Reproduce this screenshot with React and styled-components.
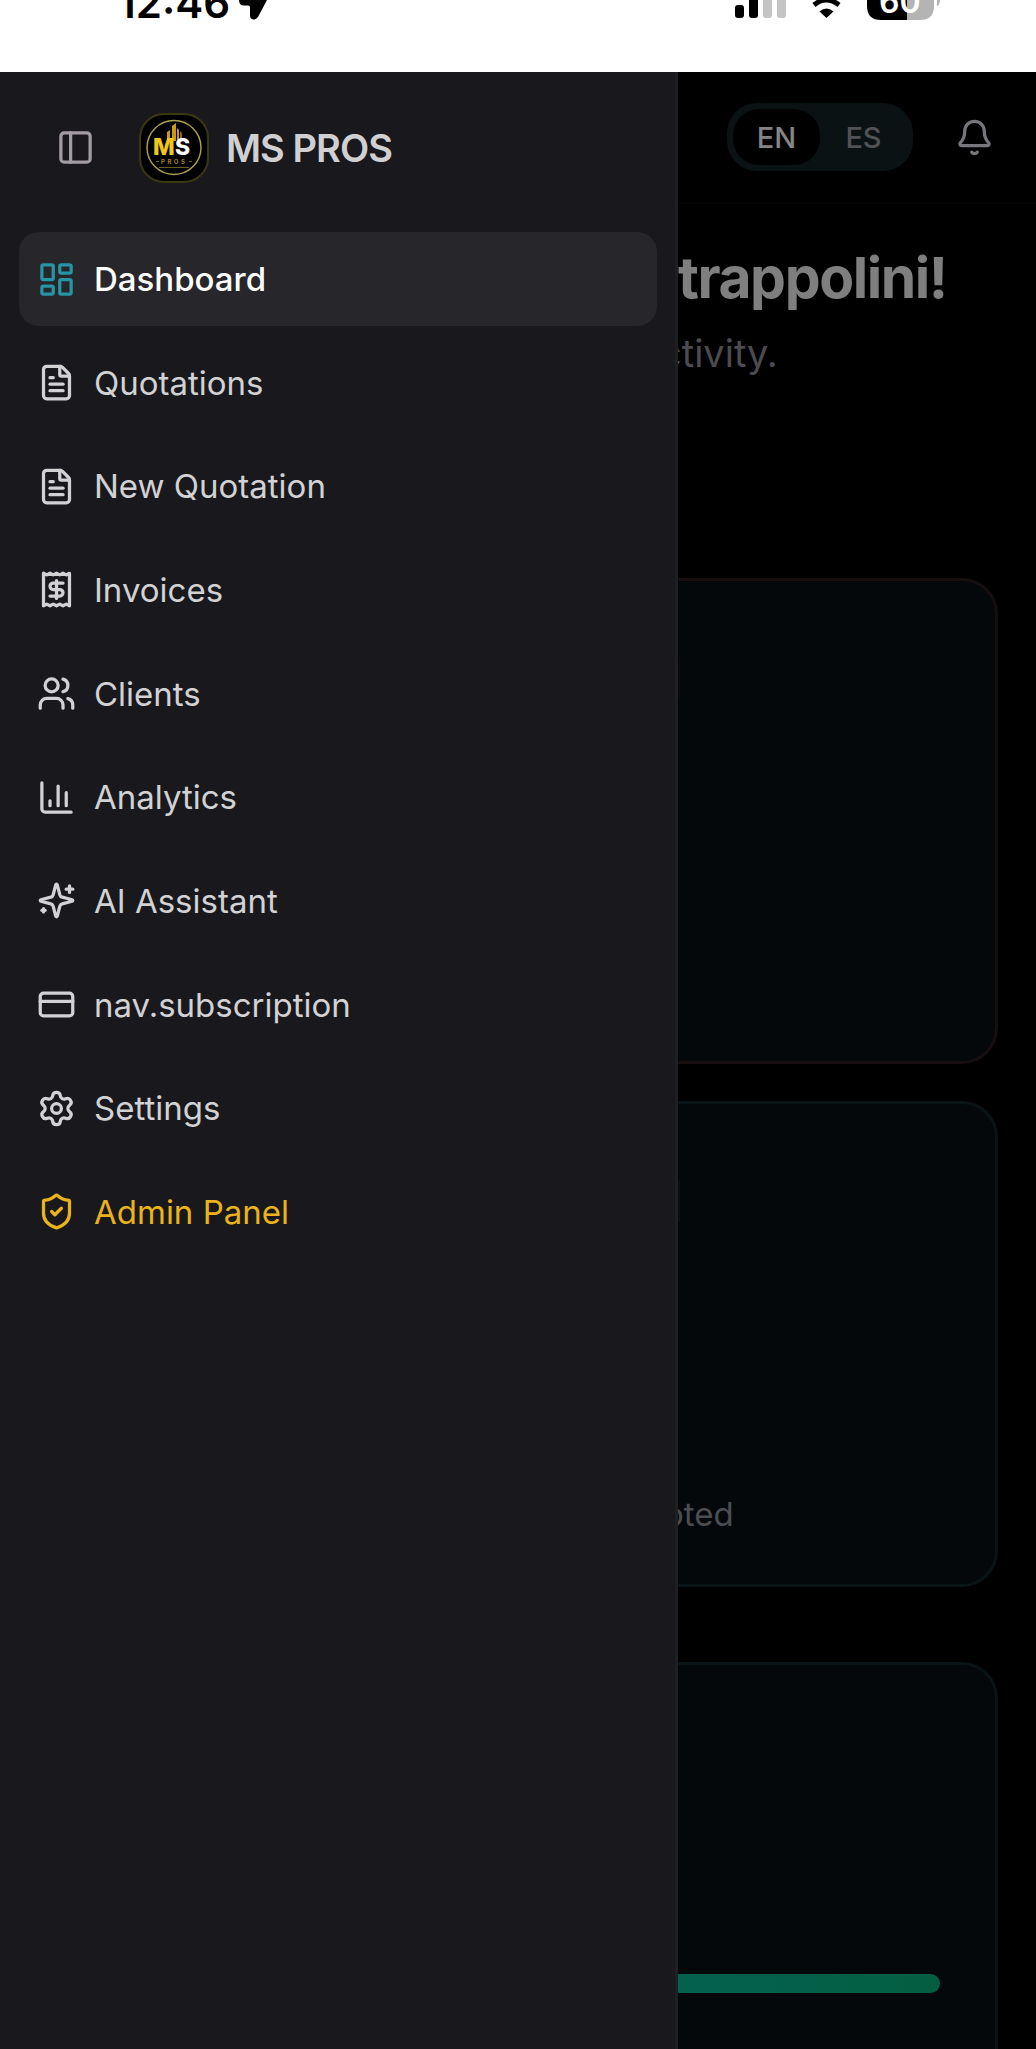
import React from 'react';
import styled, { createGlobalStyle } from 'styled-components';
import {
  PanelLeft, LayoutDashboard, FileText, Users, ChartColumn,
  CreditCard, Settings, ShieldCheck, Bell,
} from 'lucide-react';

const GlobalStyle = createGlobalStyle`
  *, *::before, *::after { box-sizing: border-box; }
  body {
    margin: 0;
    background: #000;
    font-family: Inter, "Liberation Sans", sans-serif;
    -webkit-font-smoothing: antialiased;
  }
  h1, p, ul { margin: 0; padding: 0; }
  ul { list-style: none; }
  button { font: inherit; border: 0; padding: 0; background: none; cursor: pointer; }
`;

const Page = styled.div`
  display: flex;
  flex-direction: column;
  min-height: 100vh;
`;

const StatusBar = styled.div`
  display: flex;
  justify-content: space-between;
  align-items: flex-start;
  height: 72px;
  padding: 0 96px 0 118px;
  background: #fff;
  color: #000;
  overflow: hidden;
`;

const Clock = styled.div`
  display: flex;
  gap: 9px;
  height: 23px;
  align-items: flex-end;
  font-size: 42px;
  font-weight: 600;
  line-height: 40px;
`;

const StatusIcons = styled.svg`
  display: block;
  width: 206px;
  height: 24px;
`;

const Body = styled.div`
  display: flex;
  flex: 1;
`;

const Sidebar = styled.aside`
  position: relative;
  z-index: 1;
  flex: 0 0 678px;
  padding: 0 18px 0 19px;
  background: #19191d;
  border-right: 3px solid #1d2022;
`;

const Brand = styled.div`
  display: flex;
  align-items: center;
  height: 160px;
  padding: 0 0 9px 37px;
`;

const BrandName = styled.span`
  margin-left: 17px;
  color: #d0d0d2;
  font-size: 38px;
  font-weight: 600;
  letter-spacing: -0.025em;
`;

const IconButton = styled.button`
  display: flex;
  color: ${(p) => p.$color};
`;

const Logo = styled.svg`
  width: 70px;
  height: 70px;
  margin-left: 44px;
`;

const NavList = styled.ul`
  display: flex;
  flex-direction: column;
  justify-content: space-between;
  min-height: 1027px;
`;

const NavLink = styled.a`
  display: flex;
  align-items: center;
  gap: 18px;
  height: 94px;
  padding: 0 18px;
  border-radius: 20px;
  background: ${(p) => (p.$active ? '#27272b' : 'transparent')};
  color: ${(p) => p.$color};
  font-size: 33px;
  font-weight: ${(p) => (p.$active ? 500 : 400)};
  text-decoration: none;
  svg { flex: none; color: ${(p) => p.$iconColor || p.$color}; }
`;

/* The main area slides under the edge of the open drawer. */
const Main = styled.main`
  display: flex;
  flex-direction: column;
  flex: 1;
  min-width: 0;
  margin-left: -18px;
`;

const TopBar = styled.header`
  display: flex;
  align-items: center;
  justify-content: flex-end;
  gap: 42px;
  height: 132px;
  padding-right: 42px;
  border-bottom: 2px solid #040404;
`;

const LangSwitch = styled.div`
  display: flex;
  padding: 6px;
  border-radius: 30px;
  background: #0b1214;
`;

const LangButton = styled.button`
  width: 87px;
  height: 56px;
  border-radius: 26px;
  background: ${(p) => (p.$active ? '#000' : 'transparent')};
  color: ${(p) => (p.$active ? '#858585' : '#505256')};
  font-size: 29px;
  font-weight: 500;
`;

const Intro = styled.section`
  padding: 38px 0 0;
  height: 374px;
`;

const Title = styled.h1`
  padding-left: 18px;
  color: #7f7f7f;
  font-size: 57px;
  font-weight: 700;
  line-height: 72px;
  letter-spacing: -0.025em;
`;

const Subtitle = styled.p`
  margin-top: 10px;
  color: #4b4b50;
  font-size: 38px;
  line-height: 58px;
`;

const Cards = styled.div`
  display: flex;
  flex-direction: column;
  flex: 1;
  gap: 37px;
  padding-right: 38px;
`;

const Card = styled.section`
  display: flex;
  flex-direction: column;
  justify-content: space-between;
  min-height: 486px;
  padding: 76px 0 50px;
  border: 3px solid ${(p) => p.$border};
  border-left: 0;
  border-radius: 0 36px 36px 0;
  background: #04080b;
`;

const GoalCard = styled(Card)`
  flex: 1;
  justify-content: flex-end;
  margin-top: 38px;
  min-height: 387px;
  padding: 0 55px 56px 0;
  border-bottom: 0;
  border-radius: 0 36px 0 0;
`;

const Badge = styled.div`
  width: 20px;
  height: 42px;
  background: ${(p) => p.$tint};
`;

const Note = styled.p`
  padding-left: 4px;
  color: #4b4d52;
  font-size: 33px;
  line-height: 40px;
`;

const Progress = styled.div`
  height: 19px;
  border-radius: 0 10px 10px 0;
  background: linear-gradient(90deg, #04614f, #045f41);
`;

const StrokeIcon = ({ size, children }) => (
  <svg width={size} height={size} viewBox="0 0 24 24" fill="none" stroke="currentColor" strokeWidth="2" strokeLinecap="round" strokeLinejoin="round" aria-hidden="true">
    {children}
  </svg>
);

const ReceiptIcon = ({ size }) => (
  <StrokeIcon size={size}>
    <path d="M4 2v20l2-1 2 1 2-1 2 1 2-1 2 1 2-1 2 1V2l-2 1-2-1-2 1-2-1-2 1-2-1-2 1Z" />
    <path d="M16 8h-6a2 2 0 1 0 0 4h4a2 2 0 1 1 0 4H8" />
    <path d="M12 17.5v-11" />
  </StrokeIcon>
);

const SparklesIcon = ({ size }) => (
  <StrokeIcon size={size}>
    <path d="M9.937 15.5A2 2 0 0 0 8.5 14.063l-6.135-1.582a.5.5 0 0 1 0-.962L8.5 9.936A2 2 0 0 0 9.937 8.5l1.582-6.135a.5.5 0 0 1 .963 0L14.063 8.5A2 2 0 0 0 15.5 9.937l6.135 1.581a.5.5 0 0 1 0 .964L15.5 14.063a2 2 0 0 0-1.437 1.437l-1.582 6.135a.5.5 0 0 1-.963 0z" />
    <path d="M20 3v4" />
    <path d="M22 5h-4" />
    <path d="M4 17v2" />
    <path d="M5 18H3" />
  </StrokeIcon>
);

const BrandLogo = () => (
  <Logo viewBox="0 0 70 70" role="img" aria-label="MS PROS logo">
    <rect x="1" y="1" width="68" height="68" rx="24" fill="#000" stroke="#3b3710" strokeWidth="2" />
    <circle cx="35" cy="34.5" r="27" fill="none" stroke="#aa9d4c" strokeWidth="1.5" />
    <g fill="#c79a14">
      <path d="M28 19l3-2v12h-3zM33 13l4-3v18h-4zM38 15l2 2v10h-2z" />
      <path d="M41 18l2 2v6h-2z" fill="#8c6a10" />
    </g>
    <text x="14" y="42" fontSize="23" fontWeight="800" fill="#efc61c">M</text>
    <text x="36" y="42" fontSize="23" fontWeight="800" fill="#fff">S</text>
    <text x="22" y="51" fontSize="6" fontWeight="700" letterSpacing="2.5" fill="#9c8230">PROS</text>
    <path d="M17 48.5h3M50 48.5h3M20 54.5h30" stroke="#6d5b22" strokeWidth="1" />
  </Logo>
);

const NAV = [
  { label: 'Dashboard', icon: LayoutDashboard, active: true, color: '#fff', iconColor: '#2695a5' },
  { label: 'Quotations', icon: FileText },
  { label: 'New Quotation', icon: FileText },
  { label: 'Invoices', icon: ReceiptIcon },
  { label: 'Clients', icon: Users },
  { label: 'Analytics', icon: ChartColumn },
  { label: 'AI Assistant', icon: SparklesIcon },
  { label: 'nav.subscription', icon: CreditCard },
  { label: 'Settings', icon: Settings },
  { label: 'Admin Panel', icon: ShieldCheck, color: '#eab31c' },
];

export default function App() {
  return (
    <Page>
      <GlobalStyle />
      <StatusBar>
        <Clock>
          <span>12:46</span>
          <svg width="30" height="23" viewBox="0 0 30 23" aria-hidden="true">
            <path d="M0 0H28L19 17q-3 4-7 1.5-1-1-1-3V7.5q0-2-2-2H4Q0 5 0 0z" />
          </svg>
        </Clock>
        <StatusIcons viewBox="0 0 206 24" role="img" aria-label="Signal, Wi-Fi, battery 60%">
          <rect x="1" y="5" width="9" height="13" rx="3" />
          <rect x="15" y="-4" width="9" height="22" rx="3" />
          <rect x="29" y="-10" width="9" height="28" rx="3" fill="#c4c4c4" />
          <rect x="43" y="-16" width="9" height="34" rx="3" fill="#c4c4c4" />
          <path d="M80 5q12-10 25 0" fill="none" stroke="#000" strokeWidth="5" />
          <path d="M85.5 11.5q7-6 14 0L92.5 18z" />
          <path d="M133-20h40V20H147q-14 0-14-14z" />
          <path d="M173-20h27V6q0 14-14 14h-13z" fill="#b4b4b4" />
          <path d="M203-8q4 4 3 9-1 5-3 5z" fill="#b4b4b4" />
          <text x="145" y="13" fontSize="32" fontWeight="600" fill="#fff">60</text>
        </StatusIcons>
      </StatusBar>
      <Body>
        <Sidebar>
          <Brand>
            <IconButton $color="#a39ca4" aria-label="Toggle sidebar"><PanelLeft size={39} /></IconButton>
            <BrandLogo />
            <BrandName>MS PROS</BrandName>
          </Brand>
          <nav>
            <NavList>
              {NAV.map(({ label, icon: Icon, active, color = '#d2d2d4', iconColor }) => (
                <li key={label}>
                  <NavLink href="#" $active={active} $color={color} $iconColor={iconColor} aria-current={active ? 'page' : undefined}>
                    <Icon size={39} />
                    {label}
                  </NavLink>
                </li>
              ))}
            </NavList>
          </nav>
        </Sidebar>
        <Main>
          <TopBar>
            <LangSwitch>
              <LangButton $active>EN</LangButton>
              <LangButton>ES</LangButton>
            </LangSwitch>
            <IconButton $color="#76767c" aria-label="Notifications"><Bell size={39} /></IconButton>
          </TopBar>
          <Intro>
            <Title>trappolini!</Title>
            <Subtitle>ctivity.</Subtitle>
          </Intro>
          <Cards>
            <Card $border="#160e0f"><Badge $tint="#0d090b" /></Card>
            <Card $border="#0a1315">
              <Badge $tint="#0a1012" />
              <Note>oted</Note>
            </Card>
            <GoalCard $border="#0a1315"><Progress /></GoalCard>
          </Cards>
        </Main>
      </Body>
    </Page>
  );
}
